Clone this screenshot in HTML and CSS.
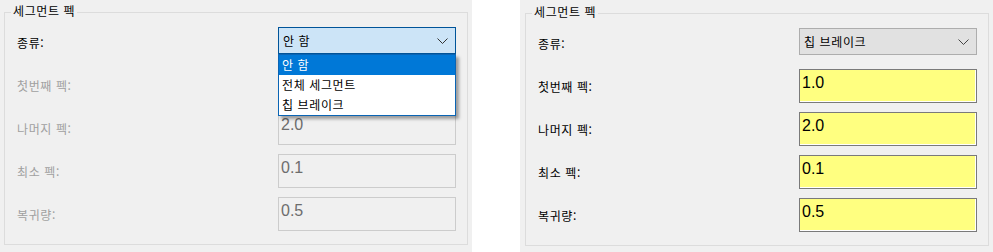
FILE: index.html
```html
<!DOCTYPE html>
<html lang="ko">
<head>
<meta charset="UTF-8">
<title>세그먼트 펙</title>
<link rel="stylesheet" href="styles.css">
</head>
<body>

<div class="screen">
  <!-- 종류: 안 함 (드롭다운 열림) -->
  <section class="panel">
    <div class="group">
      <div class="group-title">세그먼트 펙</div>
      <div class="form">
        <label class="label">종류:</label>
        <div class="combo-wrap">
          <div class="combo focused">
            <span>안 함</span>
            <svg class="chevron" width="11" height="6" viewBox="0 0 11 6"><polyline points="0.5,0.5 5.5,5.5 10.5,0.5" fill="none" stroke="#333" stroke-width="1"/></svg>
          </div>
          <ul class="dropdown">
            <li class="selected">안 함</li>
            <li>전체 세그먼트</li>
            <li>칩 브레이크</li>
          </ul>
        </div>

        <label class="label disabled">첫번째 펙:</label>
        <div class="field disabled">1.0</div>

        <label class="label disabled">나머지 펙:</label>
        <div class="field disabled">2.0</div>

        <label class="label disabled">최소 펙:</label>
        <div class="field disabled">0.1</div>

        <label class="label disabled">복귀량:</label>
        <div class="field disabled">0.5</div>
      </div>
    </div>
  </section>

  <!-- 종류: 칩 브레이크 -->
  <section class="panel panel-right">
    <div class="group">
      <div class="group-title">세그먼트 펙</div>
      <div class="form">
        <label class="label">종류:</label>
        <div class="combo-wrap">
          <div class="combo">
            <span>칩 브레이크</span>
            <svg class="chevron" width="11" height="6" viewBox="0 0 11 6"><polyline points="0.5,0.5 5.5,5.5 10.5,0.5" fill="none" stroke="#444" stroke-width="1"/></svg>
          </div>
        </div>

        <label class="label">첫번째 펙:</label>
        <div class="field active">1.0</div>

        <label class="label">나머지 펙:</label>
        <div class="field active">2.0</div>

        <label class="label">최소 펙:</label>
        <div class="field active">0.1</div>

        <label class="label">복귀량:</label>
        <div class="field active">0.5</div>
      </div>
    </div>
  </section>
</div>

</body>
</html>
```

FILE: styles.css
```css
* {
  box-sizing: border-box;
}

body {
  margin: 0;
  background-color: #fff;
  font-family: "Noto Sans CJK KR", "Noto Sans", sans-serif;
  font-size: 12px;
  letter-spacing: 0.6px;
  color: #000;
}

.screen {
  display: flex;
  gap: 48px;
  height: 252px;
}

.panel {
  width: 472px;
  background-color: #f0f0f0;
  padding: 12px 4px 0 4px;
}

.panel-right {
  width: 473px;
  padding: 13px 4px 0 5px;
}

/* 그룹 박스 */
.group {
  height: 233px;
  border: 1px solid #dcdcdc;
}

.group-title {
  width: fit-content;
  margin: -10px 0 0 6px;
  padding: 0 2px;
  line-height: 16px;
  background-color: #f0f0f0;
}

.form {
  display: grid;
  grid-template-columns: 1fr 178px;
  grid-auto-rows: 34px;
  row-gap: 9px;
  margin-top: 6px;
  padding: 0 11px 0 12px;
}

.label {
  align-self: center;
  line-height: 16px;
  padding-top: 2px;
}

.label.disabled {
  color: #a0a0a0;
}

/* 콤보 박스 */
.combo-wrap {
  position: relative;
  align-self: start;
  margin-top: 2px;
}

.combo {
  display: flex;
  align-items: center;
  justify-content: space-between;
  height: 27px;
  padding: 0 7px 0 4px;
  background-color: #e1e1e1;
  border: 1px solid #adadad;
}

.combo.focused {
  background-color: #cce4f7;
  border-color: #005499;
}

.chevron {
  display: block;
}

/* 펼쳐진 목록 */
.dropdown {
  position: absolute;
  top: 100%;
  left: 0;
  right: 0;
  z-index: 10;
  margin: 0;
  padding: 0;
  list-style: none;
  background-color: #fff;
  border: 1px solid #0a64b4;
  box-shadow: 3px 3px 3px rgba(0, 0, 0, 0.35);
}

.dropdown li {
  height: 20px;
  line-height: 20px;
  padding-left: 3px;
}

.dropdown li.selected {
  background-color: #0078d7;
  color: #fff;
}

/* 입력 칸 */
.field {
  height: 34px;
  padding: 4px 2px 0 2px;
  font-family: "Liberation Sans", Arial, sans-serif;
  font-size: 16px;
  line-height: 18px;
  letter-spacing: 0;
  border: 1px solid #ccc;
}

.field.disabled {
  color: #6d6d6d;
  background-color: #f0f0f0;
}

.field.active {
  background-color: #ffff80;
  border-color: #7a7a7a;
  box-shadow: inset -1px -1px 0 #fff;
}
```
